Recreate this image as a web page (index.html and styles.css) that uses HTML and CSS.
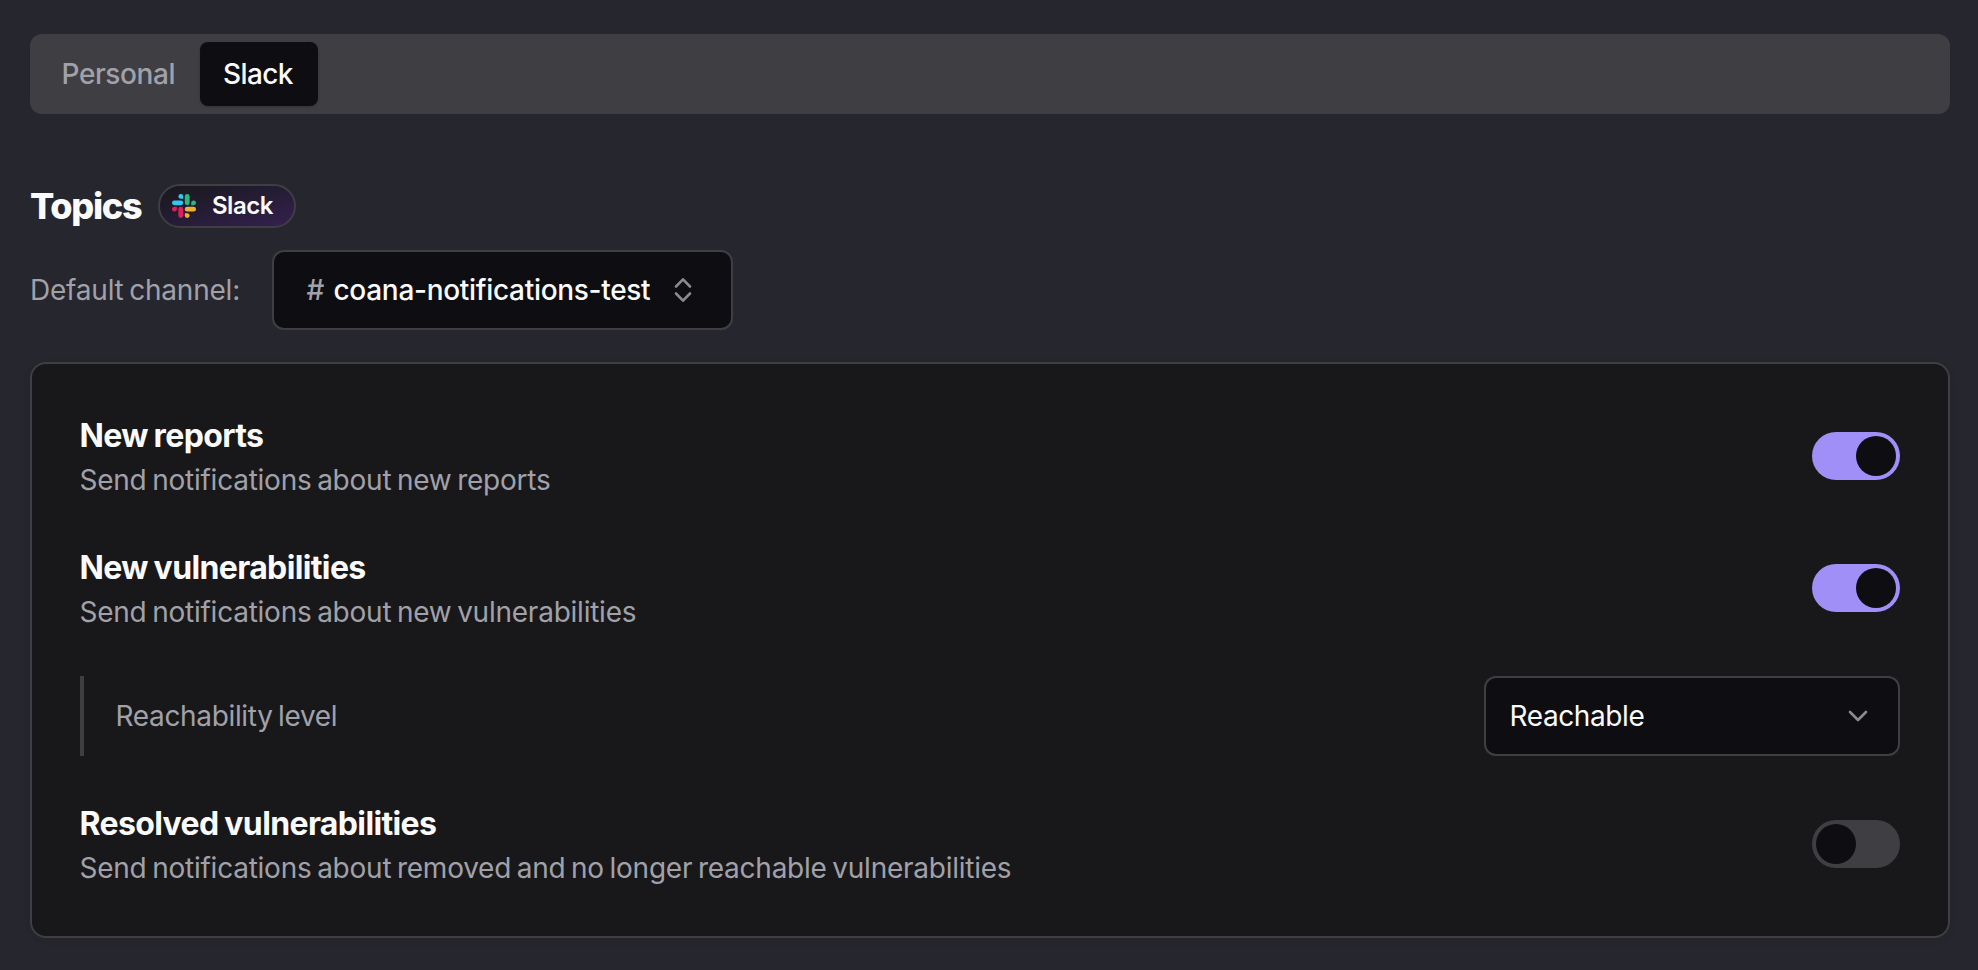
FILE: index.html
```html
<!DOCTYPE html>
<html lang="en">
<head>
<meta charset="utf-8">
<title>Notification settings</title>
<link rel="stylesheet" href="styles.css">
</head>
<body>
<main class="page">
  <nav class="tabs">
    <button class="tab personal">Personal</button>
    <button class="tab active">Slack</button>
  </nav>

  <header class="heading">
    <h1 class="heading-title">Topics</h1>
    <span class="badge">
      <svg class="slack-logo" viewBox="0 0 24 24" width="24" height="24">
        <g fill="#36c5f0"><path d="M8.8 0a2.4 2.4 0 0 0 0 4.8h2.4V2.4A2.4 2.4 0 0 0 8.8 0z"/><rect x="0" y="6.4" width="11.2" height="4.8" rx="2.4"/></g>
        <g fill="#2eb67d"><path d="M24 8.8a2.4 2.4 0 0 0-4.8 0v2.4h2.4A2.4 2.4 0 0 0 24 8.8z"/><rect x="12.8" y="0" width="4.8" height="11.2" rx="2.4"/></g>
        <g fill="#ecb22e"><path d="M15.2 24a2.4 2.4 0 0 0 0-4.8h-2.4v2.4a2.4 2.4 0 0 0 2.4 2.4z"/><rect x="12.8" y="12.8" width="11.2" height="4.8" rx="2.4"/></g>
        <g fill="#e01e5a"><path d="M0 15.2a2.4 2.4 0 0 0 4.8 0v-2.4H2.4A2.4 2.4 0 0 0 0 15.2z"/><rect x="6.4" y="12.8" width="4.8" height="11.2" rx="2.4"/></g>
      </svg>
      <span class="badge-label">Slack</span>
    </span>
  </header>

  <div class="channel">
    <span class="channel-label">Default channel:</span>
    <button class="channel-select">
      <span class="hash">#</span>
      <span class="channel-name">coana-notifications-test</span>
      <svg class="sort-icon" viewBox="0 0 18 26" width="18" height="26"><path d="M2 9.5 9 2.3l7 7.2M2 16.5l7 7.2 7-7.2"/></svg>
    </button>
  </div>

  <section class="card">
    <div class="row">
      <div class="copy">
        <h2 class="row-title">New reports</h2>
        <p class="row-text">Send notifications about new reports</p>
      </div>
      <span class="switch on"><span class="knob"></span></span>
    </div>
    <div class="row">
      <div class="copy">
        <h2 class="row-title">New vulnerabilities</h2>
        <p class="row-text">Send notifications about new vulnerabilities</p>
      </div>
      <span class="switch on"><span class="knob"></span></span>
    </div>
    <div class="row nested">
      <span class="nested-label">Reachability level</span>
      <button class="level-select">
        <span>Reachable</span>
        <svg class="chevron" viewBox="0 0 20 12" width="20" height="12"><path d="m2 2 8 8 8-8"/></svg>
      </button>
    </div>
    <div class="row">
      <div class="copy">
        <h2 class="row-title">Resolved vulnerabilities</h2>
        <p class="row-text">Send notifications about removed and no longer reachable vulnerabilities</p>
      </div>
      <span class="switch"><span class="knob"></span></span>
    </div>
  </section>
</main>
</body>
</html>
```
FILE: styles.css
```css
* { box-sizing: border-box; }

body {
  margin: 0;
  background: #26262e;
  color: #fafafa;
  font-family: "Inter", sans-serif;
  font-size: 28px;
}

h1, h2, p { margin: 0; }

button {
  border: 0;
  padding: 0;
  background: none;
  color: inherit;
  font: inherit;
  white-space: nowrap;
}

.page { padding: 34px 28px 32px 30px; }

.tabs {
  display: flex;
  height: 80px;
  padding: 8px;
  border-radius: 12px;
  background: #3f3e42;
}

.tab {
  padding: 0 24px;
  border-radius: 8px;
  color: #a1a1aa;
  font-weight: 500;
  text-align: left;
}

.personal {
  width: 162px;
  padding-left: 23.5px;
  letter-spacing: -0.4px;
}

.active {
  width: 118px;
  padding-left: 23px;
  background: #0e0d12;
  color: #fafafa;
  letter-spacing: -0.6px;
  box-shadow: 0 1px 3px rgba(0, 0, 0, 0.2);
}

.heading {
  display: flex;
  align-items: center;
  height: 44px;
  margin-top: 70px;
}

.heading-title {
  width: 128px;
  font-size: 36px;
  font-weight: 800;
  letter-spacing: -1.3px;
  line-height: 44px;
}

.badge {
  display: flex;
  align-items: center;
  gap: 16px;
  width: 138px;
  height: 44px;
  padding-left: 12px;
  border: 2px solid #3f3e43;
  border-radius: 22px;
  background: linear-gradient(to bottom right, #18181b, #33214f);
}

.badge-label {
  margin-top: -1px;
  font-size: 24px;
  font-weight: 600;
  letter-spacing: -0.5px;
}

.channel {
  display: flex;
  align-items: center;
  margin-top: 22px;
}

.channel-label {
  width: 242px;
  color: #a1a1aa;
  letter-spacing: -0.22px;
  word-spacing: -2px;
}

.channel-select {
  display: flex;
  align-items: center;
  width: 461px;
  height: 80px;
  padding-left: 32.5px;
  border: 2px solid #3f3e43;
  border-radius: 12px;
  background: #0e0d12;
  font-weight: 500;
}

.hash { width: 27px; text-align: left; color: #a1a1aa; }
.channel-name { width: 340.5px; text-align: left; letter-spacing: -0.3px; }

.sort-icon, .chevron {
  fill: none;
  stroke: #8b8b8e;
  stroke-width: 2.6;
  stroke-linecap: round;
  stroke-linejoin: round;
}

.card {
  display: flex;
  flex-direction: column;
  gap: 44px;
  margin-top: 32px;
  padding: 48px;
  border: 2px solid #3f3e43;
  border-radius: 16px;
  background: #18181a;
  box-shadow: 0 2px 6px rgba(24, 24, 26, 0.12);
}

.row {
  display: flex;
  align-items: center;
  justify-content: space-between;
}

.row-title {
  margin-left: -0.5px;
  font-size: 32px;
  font-weight: 650;
  line-height: 48px;
  letter-spacing: -0.63px;
  word-spacing: -1.2px;
}

.row-text {
  margin-left: -0.5px;
  color: #a1a1aa;
  line-height: 40px;
  letter-spacing: -0.24px;
  word-spacing: -2px;
}

.switch {
  display: flex;
  width: 88px;
  height: 48px;
  padding: 4px;
  border-radius: 24px;
  background: #3f3e42;
}

.on { justify-content: flex-end; background: #9f8ff7; }

.knob {
  width: 40px;
  height: 40px;
  border-radius: 50%;
  background: #0e0d12;
}

.nested {
  height: 80px;
  padding-left: 31.5px;
  border-left: 4px solid #3f3e43;
}

.nested-label {
  color: #a1a1aa;
  letter-spacing: -0.34px;
  word-spacing: -2px;
}

.level-select {
  display: flex;
  align-items: center;
  justify-content: space-between;
  width: 416px;
  height: 80px;
  padding: 0 30px 0 23.5px;
  border: 2px solid #3f3e43;
  border-radius: 12px;
  background: #0e0d12;
  letter-spacing: -0.39px;
}
```
